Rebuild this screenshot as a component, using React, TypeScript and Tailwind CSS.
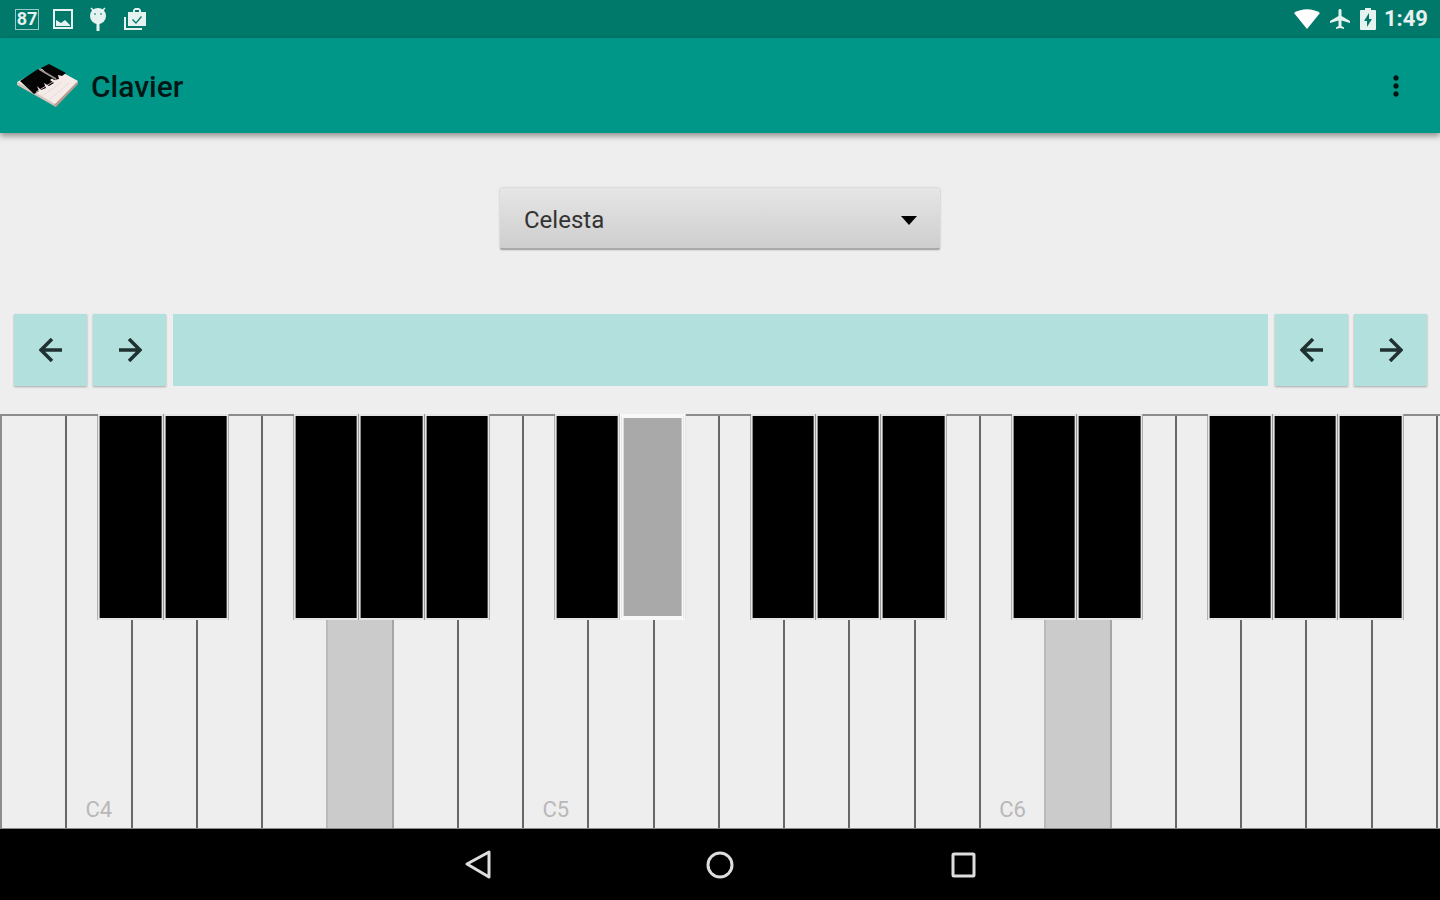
import { useState } from 'react';
import { MdAirplanemodeActive, MdMoreVert } from 'react-icons/md';

const instruments = ['Celesta', 'Glockenspiel', 'Music Box', 'Vibraphone'];

const NOTES = ['C', 'D', 'E', 'F', 'G', 'A', 'B'];

// White keys run from B3 up to B6
const whiteKeys = Array.from({ length: 22 }, (_, i) => {
  const step = i + 6;
  return { note: NOTES[step % 7], octave: 3 + Math.floor(step / 7) };
});

const pressedKeys = ['G4', 'D#5', 'D6'];

function AppLogo() {
  return (
    <svg viewBox="0 0 64 44" className="h-11 w-16" aria-hidden="true">
      <path d="M1 18 40 40v3L1 21z" fill="#d9c5bc" />
      <path d="M38 40 62 17v3L40 43z" fill="#b99c8f" />
      <path d="M1 18 33 1l29 16-23 23z" fill="#f5ecea" />
      <path d="M4 17 22 5l15 9-3 2 4 3-5 3-5-3 2 5-5 2-4-4 2 5-5 3z" fill="#050505" />
      <path d="M25 4 33 0l17 9-4 3-4-1 1 4-5 1z" fill="#050505" />
      <path d="m20 28 20-12M26 32l20-14M33 36l20-17" stroke="#e3d6d2" strokeWidth=".8" />
      <path d="m23 5 17 10" stroke="#9a9492" strokeWidth="1.5" />
    </svg>
  );
}

function StatusBar() {
  return (
    <div className="flex h-[38px] items-center justify-between bg-[#00796b] px-3 text-white/90">
      <div className="flex items-center gap-[14px] pl-[3px]">
        <span className="flex h-[21px] w-6 items-center justify-center border border-white/60 text-lg font-bold">87</span>
        <svg viewBox="0 0 20 20" className="h-5 w-5" fill="currentColor" aria-hidden="true">
          <path fillRule="evenodd" d="M0 0h20v20H0zM2 2v16h16V2zM3 11l5 3 4-3 5 5v1H3z" />
        </svg>
        <svg viewBox="0 0 20 24" className="h-6 w-[22px]" fill="currentColor" aria-hidden="true">
          <path d="M3 1l3 3M17 1l-3 3" stroke="currentColor" strokeWidth="1.5" />
          <circle cx="10" cy="9" r="8" />
          <path d="M8.500 16h3v8h-3z" />
          <path d="M6 7h2M12 7h2" stroke="#00796b" strokeWidth="1" />
        </svg>
        <svg viewBox="0 0 24 24" className="h-6 w-6" fill="currentColor" aria-hidden="true">
          <path d="M1 10v13h18v-2H3V10z" />
          <path fillRule="evenodd" d="M5 5h5V3l2-2h4l2 2v2h5v14H5zm7 0h4V3h-4zm-2 7-1 1 4 4 6-7-1-1-5 6z" />
        </svg>
      </div>
      <div className="flex items-center gap-2">
        <svg viewBox="0 0 26 20" className="h-5 w-[26px]" fill="#fff" aria-hidden="true">
          <path d="M0 4C8-1 18-1 26 4L13 20z" />
        </svg>
        <MdAirplanemodeActive className="h-6 w-6" />
        <svg viewBox="0 0 16 22" className="h-[22px] w-4" fill="currentColor" aria-hidden="true">
          <path fillRule="evenodd" d="M5 0h6v2h4q1 0 1 1v18q0 1-1 1H1q-1 0-1-1V3q0-1 1-1h4zM9 5l-5 8h3v6l5-8H9z" />
        </svg>
        <span className="text-[22px] leading-7 font-bold">1:49</span>
      </div>
    </div>
  );
}

function AppBar() {
  return (
    <header className="relative z-10 flex h-[95px] items-center justify-between bg-[#009688] pr-7 pl-4 shadow-[0_3px_6px_rgba(0,0,0,0.4)]">
      <div className="flex items-center gap-[11px]">
        <AppLogo />
        <h1 className="pt-[2px] text-[30px] leading-8 font-medium text-black/85">Clavier</h1>
      </div>
      <button type="button" aria-label="More options" className="text-black/85">
        <MdMoreVert className="h-8 w-8" />
      </button>
    </header>
  );
}

function ScrollButtons() {
  const style = 'flex h-[72px] w-[73px] items-center justify-center bg-[#b2e0dc] text-[#1f3130] shadow-[0_1px_2px_rgba(0,0,0,0.3)]';
  return (
    <div className="flex gap-[6px]">
      <button type="button" aria-label="Scroll left" className={style}>
        <svg viewBox="0 0 24 24" className="h-6 w-6" fill="none" stroke="currentColor" strokeWidth="3.500">
          <path d="M23 12H3M13 1 2 12l11 11" />
        </svg>
      </button>
      <button type="button" aria-label="Scroll right" className={style}>
        <svg viewBox="0 0 24 24" className="h-6 w-6" fill="none" stroke="currentColor" strokeWidth="3.500">
          <path d="M1 12h20M11 1l11 11-11 11" />
        </svg>
      </button>
    </div>
  );
}

function Keyboard() {
  return (
    <div className="flex flex-1 border-t-2 border-b border-l-2 border-[#8c8c8c] pr-[2px]">
      {whiteKeys.map(({ note, octave }, i) => {
        const name = `${note}${octave}`;
        const sharp = `${note}#${octave}`;
        const hasSharp = note !== 'E' && note !== 'B';
        const next = whiteKeys[i + 1];
        const pressed = pressedKeys.includes(name);
        const nextPressed = next && pressedKeys.includes(`${next.note}${next.octave}`);
        return (
          <div key={name} className="relative flex flex-1">
            <button
              type="button"
              aria-label={name}
              className={`flex flex-1 items-end justify-center border-r-2 pb-[2px] text-[22px] leading-8 text-[#b8b8b8] ${
                pressed ? 'bg-[#cbcbcb]' : 'bg-[#eee]'
              } ${nextPressed ? 'border-[#bababa]' : pressed ? 'border-[#a5a5a5]' : 'border-[#686868]'}`}
            >
              {note === 'C' && name}
            </button>
            {hasSharp && (
              <button
                type="button"
                aria-label={sharp}
                className={`absolute -top-[2px] right-[2px] z-10 h-1/2 w-full translate-x-1/2 border-2 ${
                  pressedKeys.includes(sharp)
                    ? 'border-[#f8f8f8] bg-[#a9a9a9] outline-2 -outline-offset-4 outline-[#f8f8f8]'
                    : 'border-[#e4e4e4] bg-black'
                }`}
              />
            )}
          </div>
        );
      })}
    </div>
  );
}

function NavigationBar() {
  const style = 'flex w-[243px] items-center justify-center';
  return (
    <nav className="flex h-[71px] justify-center bg-black text-[#dedede]">
      <button type="button" aria-label="Back" className={style}>
        <svg viewBox="0 0 30 30" className="h-[30px] w-[30px]" fill="none" stroke="currentColor" strokeWidth="3" strokeLinejoin="round">
          <path d="M5 14 27 2v25z" />
        </svg>
      </button>
      <button type="button" aria-label="Home" className={style}>
        <svg viewBox="0 0 30 30" className="h-[30px] w-[30px]" fill="none" stroke="currentColor" strokeWidth="3">
          <circle cx="15" cy="15" r="12" />
        </svg>
      </button>
      <button type="button" aria-label="Recent apps" className={style}>
        <svg viewBox="0 0 30 30" className="h-[30px] w-[30px]" fill="none" stroke="currentColor" strokeWidth="3">
          <rect x="5" y="4" width="21" height="22" rx="1" />
        </svg>
      </button>
    </nav>
  );
}

export default function App() {
  const [instrument, setInstrument] = useState('Celesta');

  return (
    <div className="flex min-h-screen flex-col bg-[#eee] font-[Roboto,sans-serif]">
      <StatusBar />
      <AppBar />
      <main className="flex flex-1 flex-col">
        <div className="flex justify-center pt-[55px] pb-16">
          <div className="relative w-full max-w-[440px]">
            <select
              aria-label="Instrument"
              value={instrument}
              onChange={(e) => setInstrument(e.target.value)}
              className="block h-[62px] w-full appearance-none rounded-xs border-b-2 border-[#a9a9a9] bg-linear-to-b from-[#e6e6e6] to-[#cecece] px-6 pt-1 text-2xl text-[#333] shadow-[0_0_2px_rgba(0,0,0,0.3)]"
            >
              {instruments.map((name) => (
                <option key={name}>{name}</option>
              ))}
            </select>
            <svg viewBox="0 0 18 10" className="pointer-events-none absolute top-7 right-[22px] h-[10px] w-[18px]" aria-hidden="true">
              <path d="M1 0h16L9 9z" fill="#000" />
            </svg>
          </div>
        </div>
        <div className="flex gap-[7px] pr-[13px] pb-7 pl-[14px]">
          <ScrollButtons />
          <div className="flex-1 bg-[#b2e0dc]" />
          <ScrollButtons />
        </div>
        <Keyboard />
      </main>
      <NavigationBar />
    </div>
  );
}
